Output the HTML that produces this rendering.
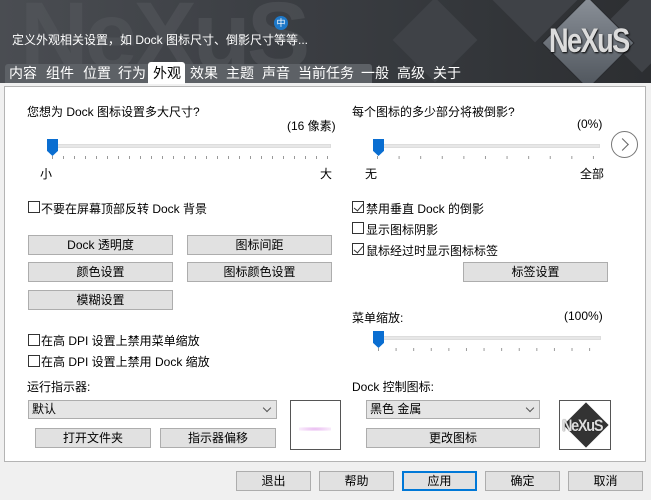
<!DOCTYPE html>
<html><head><meta charset="utf-8"><style>
*{margin:0;padding:0;box-sizing:border-box}
body{width:651px;height:500px;background:#f0f0f0;font-family:"Liberation Sans","Noto Sans CJK SC",sans-serif;font-size:12px;color:#000;position:relative;overflow:hidden}
.a{position:absolute;white-space:nowrap}
#hdr{left:0;top:0;width:651px;height:83px;background:linear-gradient(90deg,#4a4d52 0%,#3c3f44 40%,#34373b 70%,#2c2e31 100%);overflow:hidden}
.wm{position:absolute;left:20px;top:-18px;font:bold 95px "Liberation Sans",sans-serif;color:#55585d;letter-spacing:-4px;opacity:.55}
.dia{position:absolute;width:60px;height:60px;background:#3f4247;transform:rotate(45deg)}
#tabbar{left:5px;top:64px;width:367px;height:19px;background:#5d6166;border-radius:3px 3px 0 0}
.tab{position:absolute;top:64px;height:19px;color:#fff;font-size:14px;line-height:19px}
#panel{left:4px;top:86px;width:642px;height:376px;background:#fff;border:1px solid #b4b4b4}
.btn{position:absolute;height:20px;background:#e1e1e1;border:1px solid #adadad;text-align:center;line-height:18px;font-size:12px}
.cb{position:absolute;width:12px;height:12px;border:1px solid #333;background:#fff}
.cb.on::after{content:"";position:absolute;left:3px;top:0px;width:4px;height:8px;border:solid #333;border-width:0 1.5px 1.5px 0;transform:rotate(40deg)}
.track{position:absolute;height:4px;background:#e7e7e7;border:1px solid #ddd}
.thumb{position:absolute;width:11px;height:17px;background:#0a6ed1;clip-path:polygon(0 0,100% 0,100% 70%,50% 100%,0 70%)}
.ticks{position:absolute;height:3px;background-image:linear-gradient(90deg,#999 1px,transparent 1px);}
.combo{position:absolute;height:19px;background:#e5e5e5;border:1px solid #adadad;line-height:17px;padding-left:3px}
.combo::after{content:"";position:absolute;right:6px;top:4px;width:5px;height:5px;border:solid #555;border-width:0 1px 1px 0;transform:rotate(45deg)}
</style></head><body>
<div id="hdr" class="a">
<div class="wm">NeXuS</div>
<div class="dia" style="left:405px;top:10px"></div>
<div class="dia" style="left:505px;top:-30px"></div>
<div class="dia" style="left:612px;top:0px"></div>
<div class="a" style="left:554px;top:8px;width:66px;height:66px;background:linear-gradient(135deg,#8a9098,#4f555c);transform:rotate(45deg);left:555px;top:10px;border:1px solid #2a2c30"></div>
<div class="a" style="left:549px;top:22px;font:bold 34px 'Liberation Sans',sans-serif;color:#dcdcdc;letter-spacing:-2px;transform:scaleX(.8);transform-origin:left;text-shadow:1px 1px 2px #000">NeXuS</div>
<div class="a" style="left:274px;top:16px;width:14px;height:14px;border-radius:50%;background:#1e78c8;color:#fff;font-size:9px;text-align:center;line-height:14px">中</div>
<div class="a" style="left:12px;top:31px;color:#fff;font-size:12px">定义外观相关设置，如 Dock 图标尺寸、倒影尺寸等等...</div>
</div>
<div id="tabbar" class="a"></div>
<div class="a" style="left:148px;top:62px;width:37px;height:22px;background:#fff;border-radius:3px 3px 0 0"></div>
<div class="tab" style="left:9px">内容</div>
<div class="tab" style="left:46px">组件</div>
<div class="tab" style="left:83px">位置</div>
<div class="tab" style="left:118px">行为</div>
<div class="tab" style="left:153px;color:#000">外观</div>
<div class="tab" style="left:190px">效果</div>
<div class="tab" style="left:226px">主题</div>
<div class="tab" style="left:262px">声音</div>
<div class="tab" style="left:298px">当前任务</div>
<div class="tab" style="left:361px">一般</div>
<div class="tab" style="left:397px">高级</div>
<div class="tab" style="left:433px">关于</div>

<div id="panel" class="a"></div>
<!-- left -->
<div class="a" style="left:27px;top:103px">您想为 Dock 图标设置多大尺寸?</div>
<div class="a" style="left:287px;top:117px">(16 像素)</div>
<div class="track" style="left:50px;top:144px;width:281px"></div>
<div class="thumb" style="left:47px;top:139px"></div>
<div class="ticks" style="left:52px;top:156px;width:280px;background-size:11px 3px"></div>
<div class="a" style="left:40px;top:165px">小</div>
<div class="a" style="left:320px;top:165px">大</div>
<div class="cb" style="left:28px;top:201px"></div>
<div class="a" style="left:41px;top:200px">不要在屏幕顶部反转 Dock 背景</div>
<div class="btn" style="left:28px;top:235px;width:145px">Dock 透明度</div>
<div class="btn" style="left:187px;top:235px;width:145px">图标间距</div>
<div class="btn" style="left:28px;top:262px;width:145px">颜色设置</div>
<div class="btn" style="left:187px;top:262px;width:145px">图标颜色设置</div>
<div class="btn" style="left:28px;top:290px;width:145px">模糊设置</div>
<div class="cb" style="left:28px;top:334px"></div>
<div class="a" style="left:41px;top:332px">在高 DPI 设置上禁用菜单缩放</div>
<div class="cb" style="left:28px;top:355px"></div>
<div class="a" style="left:41px;top:353px">在高 DPI 设置上禁用 Dock 缩放</div>
<div class="a" style="left:27px;top:378px">运行指示器:</div>
<div class="combo" style="left:28px;top:400px;width:249px">默认</div>
<div class="a" style="left:290px;top:400px;width:51px;height:50px;border:1px solid #555;background:#fff"><div class="a" style="left:8px;top:26px;width:32px;height:4px;background:radial-gradient(ellipse,#e8b8f0,#fff)"></div></div>
<div class="btn" style="left:35px;top:428px;width:116px">打开文件夹</div>
<div class="btn" style="left:160px;top:428px;width:116px">指示器偏移</div>
<!-- right -->
<div class="a" style="left:352px;top:103px">每个图标的多少部分将被倒影?</div>
<div class="a" style="left:577px;top:117px">(0%)</div>
<div class="track" style="left:378px;top:144px;width:222px"></div>
<div class="thumb" style="left:373px;top:139px"></div>
<div class="ticks" style="left:377px;top:156px;width:224px;background-size:21.6px 3px"></div>
<div class="a" style="left:365px;top:165px">无</div>
<div class="a" style="left:580px;top:165px">全部</div>
<div class="a" style="left:611px;top:131px;width:27px;height:27px;border:1.5px solid #777;border-radius:50%"><div class="a" style="left:6px;top:8px;width:9px;height:9px;border:solid #666;border-width:1.5px 1.5px 0 0;transform:rotate(45deg)"></div></div>
<div class="cb on" style="left:352px;top:201px"></div>
<div class="a" style="left:366px;top:200px">禁用垂直 Dock 的倒影</div>
<div class="cb" style="left:352px;top:222px"></div>
<div class="a" style="left:366px;top:221px">显示图标阴影</div>
<div class="cb on" style="left:352px;top:243px"></div>
<div class="a" style="left:366px;top:242px">鼠标经过时显示图标标签</div>
<div class="btn" style="left:463px;top:262px;width:145px">标签设置</div>
<div class="a" style="left:352px;top:309px">菜单缩放:</div>
<div class="a" style="left:564px;top:309px">(100%)</div>
<div class="track" style="left:378px;top:336px;width:223px"></div>
<div class="thumb" style="left:373px;top:331px"></div>
<div class="ticks" style="left:378px;top:348px;width:224px;background-size:17.6px 3px"></div>
<div class="a" style="left:352px;top:378px">Dock 控制图标:</div>
<div class="combo" style="left:366px;top:400px;width:174px">黑色 金属</div>
<div class="a" style="left:559px;top:400px;width:52px;height:50px;border:1px solid #555;background:#fff;overflow:hidden">
<div class="a" style="left:10px;top:8px;width:32px;height:32px;background:#333;transform:rotate(45deg)"></div>
<div class="a" style="left:2px;top:15px;font:bold 17px 'Liberation Sans',sans-serif;color:#ddd;letter-spacing:-1.5px;transform:scaleX(.85);transform-origin:left;text-shadow:0 0 1px #000">NeXuS</div></div>
<div class="btn" style="left:366px;top:428px;width:174px">更改图标</div>
<!-- bottom -->
<div class="btn" style="left:236px;top:471px;width:75px">退出</div>
<div class="btn" style="left:319px;top:471px;width:75px">帮助</div>
<div class="btn" style="left:402px;top:471px;width:75px;border:1px solid #0078d7;box-shadow:inset 0 0 0 1px #0078d7">应用</div>
<div class="btn" style="left:485px;top:471px;width:75px">确定</div>
<div class="btn" style="left:568px;top:471px;width:75px">取消</div>
</body></html>
